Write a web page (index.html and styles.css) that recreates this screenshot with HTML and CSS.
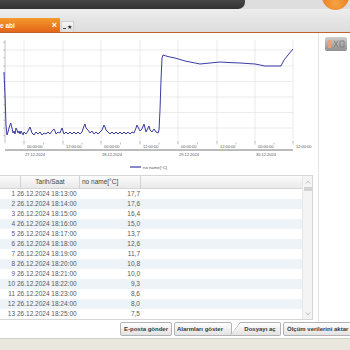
FILE: index.html
```html
<!DOCTYPE html>
<html lang="tr">
<head>
    <meta charset="UTF-8">
    <meta name="viewport" content="width=device-width, initial-scale=1.0">
    <title>Ölçüm verileri</title>
    <link rel="stylesheet" href="styles.css">
</head>
<body>
    <!-- Üst bar -->
    <div class="topbar">
        <div class="topbar-dark"></div>
        <div class="logo"></div>
    </div>

    <!-- Sekmeler -->
    <div class="tabstrip">
        <div class="tab tab-active"><span>e abi</span><span class="tab-close">×</span></div>
        <div class="tab tab-new"><span class="tab-new-line"></span>★</div>
    </div>

    <div class="main">
        <div class="content">
            <!-- Grafik -->
            <svg class="chart" width="318" height="137" viewBox="0 33 318 137">
                <g stroke="#e2e2e2" stroke-width="0.7" fill="none">
                    <path d="M5 50H293M5 66H293M5 81.5H293M5 97H293M5 112.5H293M5 128H293"/>
                    <path d="M24 40V143M63 40V143M101 40V143M140 40V143M178 40V143M217 40V143M255 40V143M293 40V143"/>
                </g>
                <g stroke="#9a9a9a" stroke-width="0.6" fill="none">
                    <path d="M5 40V143"/>
                    <path d="M3 42.25H5M3 50H5M3.5 57.75H5M3 66H5M3.5 73.75H5M3 81.5H5M3.5 89.25H5M3 97H5M3.5 104.75H5M3 112.5H5M3.5 120.25H5M3 128H5M3.5 135.75H5"/>
                    <path d="M24 141V144.5M63 141V144.5M101 141V144.5M140 141V144.5M178 141V144.5M217 141V144.5M255 141V144.5M293 141V144.5"/>
                    <path d="M43.5 142.5V144.5M82 142.5V144.5M120.5 142.5V144.5M159 142.5V144.5M197.5 142.5V144.5M236 142.5V144.5M274 142.5V144.5"/>
                </g>
                <path d="M5 150H293" stroke="#555" stroke-width="0.8"/>
                <g class="axis-text">
                    <text x="27" y="148.3">00:00:00</text>
                    <text x="66" y="148.3">12:00:00</text>
                    <text x="104" y="148.3">00:00:00</text>
                    <text x="143" y="148.3">12:00:00</text>
                    <text x="181" y="148.3">00:00:00</text>
                    <text x="220" y="148.3">12:00:00</text>
                    <text x="258" y="148.3">00:00:00</text>
                    <text x="296" y="148.3">12:00:00</text>
                    <text x="25" y="155.6">27.12.2024</text>
                    <text x="102" y="155.6">28.12.2024</text>
                    <text x="179" y="155.6">29.12.2024</text>
                    <text x="256" y="155.6">30.12.2024</text>
                </g>
                <polyline class="series" points="4,72 5,95 6,125 7,135 8,132 9,128 10.7,123 12,128 13,133 14,131 15,134 16,128 17,130 18,133 19,131 20,134 21,131 22,133 23,135 24,132 26,134 28,131 30,127 31,130 32,133 34,135 36,132 38,134 40,132 42,135 44,133 46,134 48,132 50,134 52,131 54,129 55,131 56,134 58,132 60,133 62,128 63,131 64,134 66,132 68,134 70,132 72,134 74,132 76,134 78,132 80,134 82,132 84,126 85,124 86,128 88,130 90,133 92,131 94,134 96,132 98,134 100,132 102,130 104,125 105,127 106,130 108,132 110,134 112,132 114,134 116,132 118,134 120,132 122,134 124,132 126,134 128,132 130,134 132,132 134,133 136,128 137,125 138,127 140,131 142,129 144,124 145,128 146,132 148,128 149,126 150,130 152,132 154,129 156,132 158,133 159,130 160,110 161,80 162,58 163,55 166,56 170,57 175,58 185,61 195,63 200,64 210,63 220,62 228,62.5 240,63 255,64 265,66 281,66 284,60 288,55 293,49"/>
                <path d="M130 167H141" stroke="#3b3ba6" stroke-width="1.2"/>
                <text class="legend-text" x="143" y="168.5">no name[°C]</text>
            </svg>

            <!-- Tablo -->
            <div class="grid">
                <div class="grid-main">
                    <div class="grid-head">
                        <div class="h-idx"></div>
                        <div class="h-date">Tarih/Saat</div>
                        <div class="h-val">no name[°C]</div>
                        <div class="h-fill"></div>
                    </div>
                    <table class="rows">
                        <colgroup><col class="col-idx"><col class="col-date"><col class="col-val"><col></colgroup>
                        <tr><td class="c-idx">1</td><td class="c-date">26.12.2024 18:13:00</td><td class="c-val">17,7</td><td></td></tr>
                        <tr><td class="c-idx">2</td><td class="c-date">26.12.2024 18:14:00</td><td class="c-val">17,6</td><td></td></tr>
                        <tr><td class="c-idx">3</td><td class="c-date">26.12.2024 18:15:00</td><td class="c-val">16,4</td><td></td></tr>
                        <tr><td class="c-idx">4</td><td class="c-date">26.12.2024 18:16:00</td><td class="c-val">15,0</td><td></td></tr>
                        <tr><td class="c-idx">5</td><td class="c-date">26.12.2024 18:17:00</td><td class="c-val">13,7</td><td></td></tr>
                        <tr><td class="c-idx">6</td><td class="c-date">26.12.2024 18:18:00</td><td class="c-val">12,6</td><td></td></tr>
                        <tr><td class="c-idx">7</td><td class="c-date">26.12.2024 18:19:00</td><td class="c-val">11,7</td><td></td></tr>
                        <tr><td class="c-idx">8</td><td class="c-date">26.12.2024 18:20:00</td><td class="c-val">10,8</td><td></td></tr>
                        <tr><td class="c-idx">9</td><td class="c-date">26.12.2024 18:21:00</td><td class="c-val">10,0</td><td></td></tr>
                        <tr><td class="c-idx">10</td><td class="c-date">26.12.2024 18:22:00</td><td class="c-val">9,3</td><td></td></tr>
                        <tr><td class="c-idx">11</td><td class="c-date">26.12.2024 18:23:00</td><td class="c-val">8,6</td><td></td></tr>
                        <tr><td class="c-idx">12</td><td class="c-date">26.12.2024 18:24:00</td><td class="c-val">8,0</td><td></td></tr>
                        <tr><td class="c-idx">13</td><td class="c-date">26.12.2024 18:25:00</td><td class="c-val">7,5</td><td></td></tr>
                    </table>
                </div>
                <div class="scroll">
                    <svg width="6" height="4"><polyline points="1,3.5 3,1 5,3.5" fill="none" stroke="#b0b0b0" stroke-width="0.8"/></svg>
                    <div class="scroll-thumb"></div>
                    <div class="scroll-space"></div>
                    <svg width="6" height="4"><polyline points="1,0.5 3,3 5,0.5" fill="none" stroke="#b0b0b0" stroke-width="0.8"/></svg>
                </div>
            </div>
        </div>

        <div class="side">
            <svg width="22" height="14">
                <defs>
                    <linearGradient id="iconGrad" x1="0" y1="0" x2="0" y2="1">
                        <stop offset="0" stop-color="#cfcfcf"/>
                        <stop offset="1" stop-color="#8e8e8e"/>
                    </linearGradient>
                </defs>
                <rect width="22" height="14" rx="2" fill="url(#iconGrad)"/>
                <rect x="3" y="3" width="3" height="8" rx="1" fill="#e8a27a"/>
                <path d="M9 3.5L13 10.5M13 3.5L9 10.5M15 4H19V10H15Z" stroke="#7a7a7a" stroke-width="0.9" fill="none"/>
            </svg>
        </div>
    </div>

    <!-- Butonlar -->
    <div class="actions">
        <button class="btn btn-mail">E-posta gönder</button>
        <button class="btn btn-alarm">Alarmları göster</button>
        <button class="btn btn-open">Dosyayı aç</button>
        <button class="btn btn-export">Ölçüm verilerini aktar</button>
    </div>

    <div class="statusbar"></div>
</body>
</html>
```

FILE: styles.css
```css
* {
    box-sizing: border-box;
}
body {
    margin: 0;
    width: 350px;
    height: 350px;
    overflow: hidden;
    font-family: "Liberation Sans", Arial, sans-serif;
    background: #fff;
    color: #444;
}

/* Üst bar */
.topbar {
    display: flex;
    height: 9px;
    background: #dedede;
}
.topbar-dark {
    width: 245px;
    background: linear-gradient(#474747, #323232);
    border-bottom-right-radius: 7px;
}
.logo {
    width: 27px;
    height: 27px;
    margin: -17px 1px 0 auto;
    border-radius: 50%;
    background: radial-gradient(circle at 50% 75%, #f6a443, #e0620f);
}

/* Sekmeler */
.tabstrip {
    display: flex;
    align-items: flex-end;
    height: 24px;
    background: linear-gradient(#ededed, #dcdcdc);
    border-bottom: 1px solid #c4602c;
}
.tab-active {
    display: flex;
    align-items: center;
    justify-content: space-between;
    width: 60px;
    height: 14px;
    padding-right: 3px;
    background: linear-gradient(#f49a2c, #e2661a);
    color: #fff;
    font-size: 6.5px;
    font-weight: bold;
}
.tab-close {
    font-size: 9px;
    line-height: 1;
}
.tab-new {
    display: flex;
    align-items: center;
    justify-content: center;
    width: 13px;
    height: 11px;
    margin-left: 1px;
    background: linear-gradient(#f7f7f7, #dedede);
    border: 1px solid #d0d0d0;
    border-bottom: none;
    color: #333;
    font-size: 5.5px;
}
.tab-new-line {
    width: 3px;
    height: 1px;
    margin: 3px 1px 0 0;
    background: #444;
}

/* Ana alan */
.main {
    display: flex;
    height: 288px;
}
.content {
    width: 318px;
}
.chart {
    display: block;
}
.axis-text text {
    font-size: 4px;
    fill: #555;
}
.legend-text {
    font-size: 4.3px;
    fill: #555;
}
.series {
    fill: none;
    stroke: #3b3ba6;
    stroke-width: 1;
    stroke-linejoin: round;
}

/* Tablo */
.grid {
    display: flex;
    width: 313px;
    height: 145px;
    margin-top: 5px;
    border: 1px solid #d6d6d6;
    border-left: none;
}
.grid-main {
    flex: 1;
    overflow: hidden;
}
.grid-head {
    display: flex;
    height: 13px;
    background: linear-gradient(#fcfcfc, #e9e9e9);
    border-bottom: 1px solid #d6d6d6;
    font-size: 6.5px;
    line-height: 12px;
    color: #444;
}
.grid-head div {
    border-right: 1px solid #d3d3d3;
}
.h-idx {
    width: 21px;
}
.h-date {
    width: 59px;
    text-align: center;
}
.h-val {
    width: 61px;
    padding-left: 2px;
}
.grid-head .h-fill {
    flex: 1;
    border-right: none;
}
.rows {
    width: 100%;
    border-collapse: collapse;
    table-layout: fixed;
    font-size: 6.5px;
    color: #5a5a5a;
}
.rows td {
    height: 10px;
    padding: 0;
    line-height: 10px;
    white-space: nowrap;
}
.rows tr:nth-child(even) {
    background: #eef3f7;
}
.col-idx {
    width: 16px;
}
.col-date {
    width: 64px;
}
.col-val {
    width: 60px;
}
.rows .c-idx {
    text-align: right;
    padding-right: 1px;
}
.rows .c-date {
    padding-left: 1px;
}
.rows .c-val {
    text-align: right;
}
.scroll {
    display: flex;
    flex-direction: column;
    align-items: center;
    width: 10px;
    padding: 4px 0 3px;
    background: #f4f4f4;
    border-left: 1px solid #e6e6e6;
}
.scroll-thumb {
    width: 8px;
    height: 4px;
    margin-top: 3px;
    background: #d3d3d3;
}
.scroll-space {
    flex: 1;
}

/* Sağ panel */
.side {
    flex: 1;
    padding: 4px 0 0 6px;
    border-left: 1px solid #e3e3e3;
}

/* Butonlar */
.actions {
    display: flex;
    height: 17px;
    padding: 1px 0 0 120px;
    overflow: hidden;
    white-space: nowrap;
}
.btn {
    flex-shrink: 0;
    height: 14px;
    padding: 0;
    font: bold 6px "Liberation Sans", Arial, sans-serif;
    color: #3a3a3a;
    background: linear-gradient(#ffffff, #e2e2e2);
    border: 1px solid #b3b3b3;
    border-radius: 2px;
}
.btn-mail {
    width: 52px;
    margin-right: 2px;
}
.btn-alarm {
    width: 58px;
    padding-right: 6px;
}
.btn-open {
    width: 51px;
    margin-left: -2px;
    padding-left: 10px;
    border-left: none;
    border-radius: 0 2px 2px 0;
    clip-path: polygon(10px 0, 100% 0, 100% 100%, 0 100%);
    background:
        linear-gradient(to bottom right, transparent calc(50% - 0.6px), #9a9a9a 50%, transparent calc(50% + 0.6px)) left top / 10px 100% no-repeat,
        linear-gradient(#ffffff, #e2e2e2);
}
.btn-export {
    width: 75px;
    margin-left: 2px;
    text-align: left;
    padding-left: 3px;
}

.statusbar {
    height: 13px;
    background: #e9e7de;
    border-top: 1px solid #d2d0c6;
}
```
